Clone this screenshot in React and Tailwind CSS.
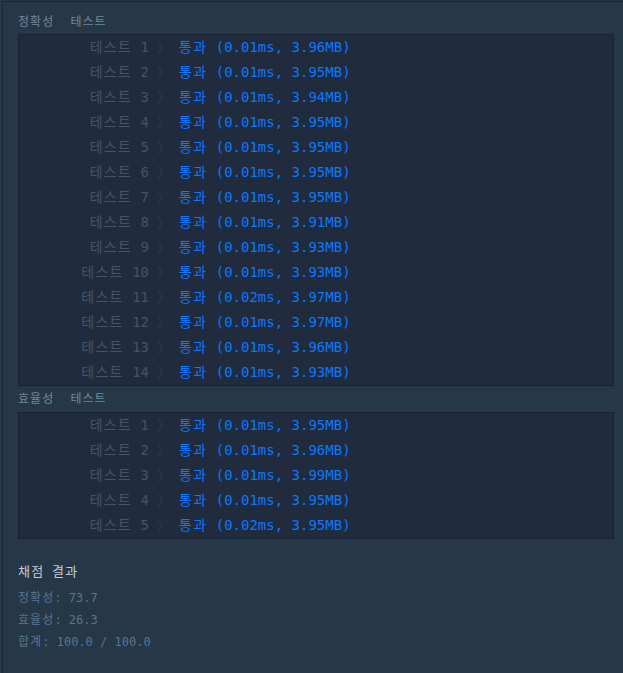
import React from "react";

const acc = [
  ["0.01ms", "3.96MB"],
  ["0.01ms", "3.95MB"],
  ["0.01ms", "3.94MB"],
  ["0.01ms", "3.95MB"],
  ["0.01ms", "3.95MB"],
  ["0.01ms", "3.95MB"],
  ["0.01ms", "3.95MB"],
  ["0.01ms", "3.91MB"],
  ["0.01ms", "3.93MB"],
  ["0.01ms", "3.93MB"],
  ["0.02ms", "3.97MB"],
  ["0.01ms", "3.97MB"],
  ["0.01ms", "3.96MB"],
  ["0.01ms", "3.93MB"],
];
const eff = [
  ["0.01ms", "3.95MB"],
  ["0.01ms", "3.96MB"],
  ["0.01ms", "3.99MB"],
  ["0.01ms", "3.95MB"],
  ["0.02ms", "3.95MB"],
];

const mono = { fontFamily: "'DejaVu Sans Mono', 'Noto Sans CJK KR', monospace" };

function K({ children }) {
  return <span className="tracking-[0.09em]">{children}</span>;
}

function Row({ n, t, m }) {
  return (
    <div className="flex h-[25px] items-center whitespace-pre text-[14px]">
      <span className="w-[130px] text-right text-[#44546a]">
        <K>테스트</K>
        {` ${n}`}
      </span>
      <span className="ml-[8px] w-[22px] text-[#2e3b4d]">〉</span>
      <span className="text-[#0a78ff]">
        <K>통과</K>
        {` (${t}, ${m})`}
      </span>
    </div>
  );
}

function Box({ rows }) {
  return (
    <div className="mr-[9px] border border-[#192231] bg-[#202b3d]">
      {rows.map((r, i) => (
        <Row key={i} n={i + 1} t={r[0]} m={r[1]} />
      ))}
    </div>
  );
}

export default function App() {
  return (
    <div className="h-[673px] w-[623px] overflow-hidden bg-[#263747]" style={mono}>
      <div className="ml-[2px] mt-[1px] h-[672px] border-l border-t border-[#1a2535] pl-[15px] pt-[10px]">
        <div className="mb-[2px] flex h-[20px] items-center whitespace-pre text-[12px] text-[#72879a]">
          <K>정확성</K>
          <span className="ml-[16px]">
            <K>테스트</K>
          </span>
        </div>
        <Box rows={acc} />
        <div className="mb-[3px] mt-[3px] flex h-[20px] items-center whitespace-pre text-[12px] text-[#72879a]">
          <K>효율성</K>
          <span className="ml-[16px]">
            <K>테스트</K>
          </span>
        </div>
        <Box rows={eff} />
        <div className="mt-[22px] h-[22px] whitespace-pre text-[13px] leading-[22px] text-[#c4ccd4]">
          <K>채점</K>
          {" "}
          <K>결과</K>
        </div>
        <div className="mt-[4px] text-[12px] leading-[22px] text-[#587690]">
          <div className="h-[22px] whitespace-pre">
            <K>정확성</K>: 73.7
          </div>
          <div className="h-[22px] whitespace-pre">
            <K>효율성</K>: 26.3
          </div>
          <div className="h-[22px] whitespace-pre">
            <K>합계</K>: 100.0 / 100.0
          </div>
        </div>
      </div>
    </div>
  );
}
